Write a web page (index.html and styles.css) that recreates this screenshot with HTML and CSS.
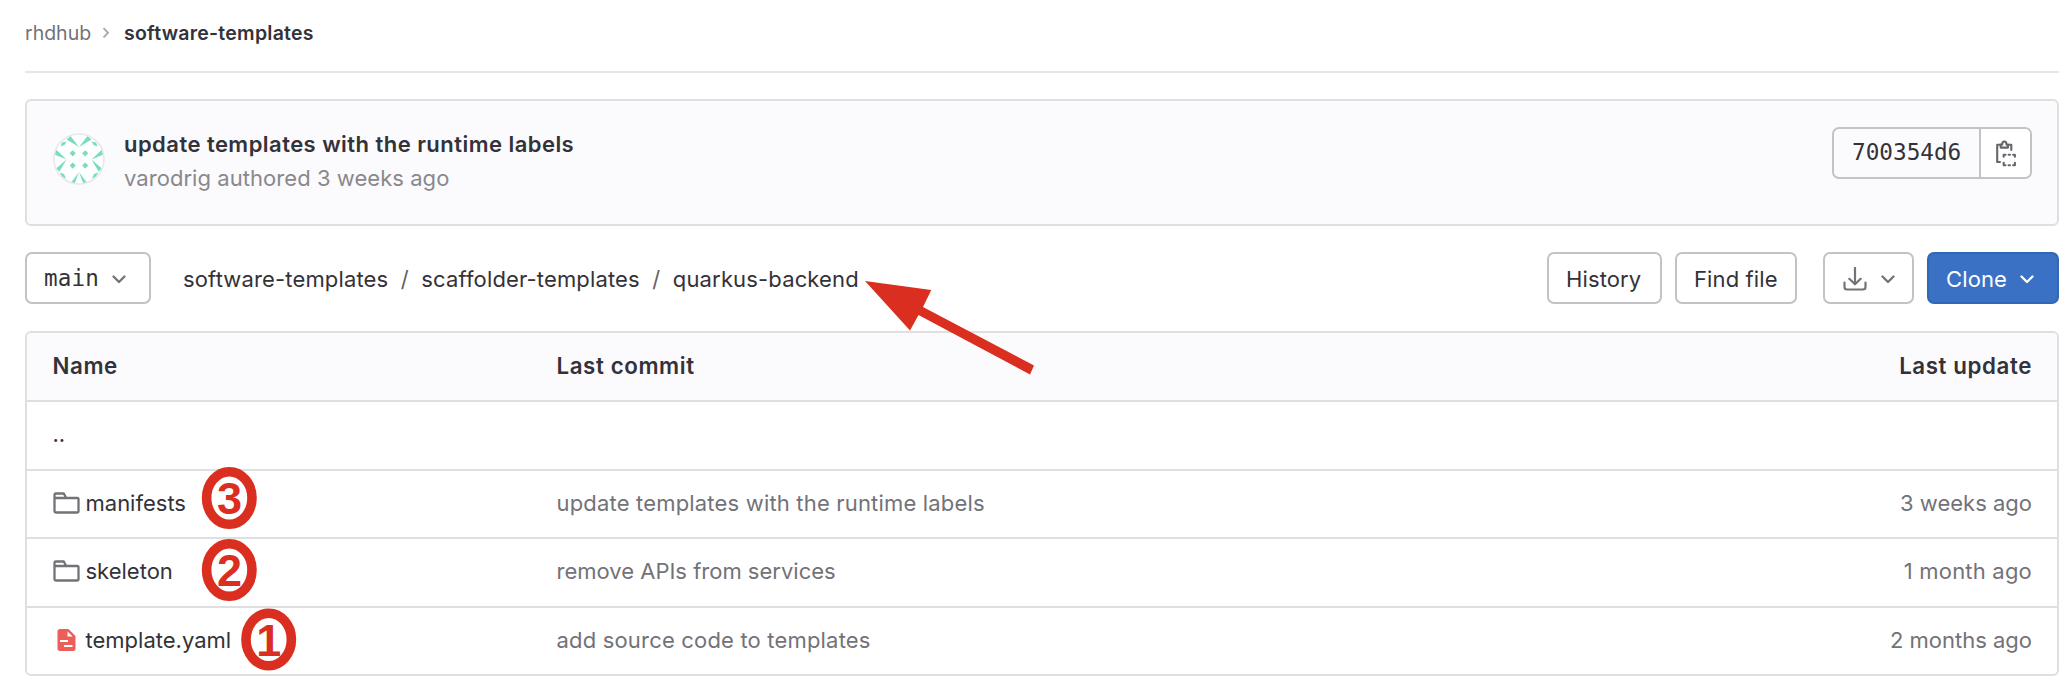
FILE: index.html
```html
<!DOCTYPE html>
<html lang="en">
<head>
<meta charset="utf-8">
<title>software-templates</title>
<link rel="stylesheet" href="styles.css">
</head>
<body>
<svg class="sprite" aria-hidden="true">
  <symbol id="chevron" viewBox="0 0 16 16"><path d="M4 6.200 8 10.200l4-4" fill="none" stroke="currentColor" stroke-width="1.700" stroke-linecap="round" stroke-linejoin="round"/></symbol>
  <symbol id="folder" viewBox="0 0 27 22"><path d="M1.500 19.200V2.800Q1.500 1.500 2.800 1.500H10.800L13.200 6H24Q25.500 6 25.500 7.300V19.200Q25.500 20.500 24 20.500H2.800Q1.500 20.500 1.500 19.200ZM1.500 6H13.200" fill="none" stroke="#737278" stroke-width="2.300" stroke-linejoin="round"/></symbol>
</svg>
<main class="page">
  <nav class="crumbs">
    <a class="crumb-group">rhdhub</a>
    <svg class="crumb-sep" viewBox="0 0 8 12"><path d="m1.500 1.200 4.500 4.600-4.500 4.600" fill="none" stroke="#a4a3a8" stroke-width="1.700"/></svg>
    <a class="crumb-project">software-templates</a>
  </nav>

  <section class="commit">
    <svg class="avatar" viewBox="0 0 52 52">
      <defs><clipPath id="round"><circle cx="26" cy="26" r="25"/></clipPath></defs>
      <circle cx="26" cy="26" r="25" fill="#fff"/>
      <g clip-path="url(#round)" fill="#7adcc2">
        <path d="M26 14 13.500 6.500 17.500 3ZM26 14 38.500 6.500 34.500 3ZM26 39 17 51H21.500ZM26 39 35 51H30.500ZM13.500 26.500 1.500 21.500 2.500 16ZM13.500 26.500 6.500 38.500 3 35.500ZM38.500 26.500 50.500 21.500 49.500 16ZM38.500 26.500 45.500 38.500 49 35.500Z"/>
        <path d="M7.500 13.500 9 9.500 13.500 8.500 11.500 12ZM44.500 13.500 43 9.500 38.500 8.500 40.500 12ZM7 39.500 11 41 13 45.500 9 44ZM45 39.500 41 41 39 45.500 43 44Z"/>
        <path d="m19.700 17.200 3.100 3.100-3.100 3.100-3.100-3.100ZM32.200 17.200l3.100 3.100-3.100 3.100-3.100-3.100ZM19.700 29.500l3.100 3.100-3.100 3.100-3.100-3.100ZM32.200 29.500l3.100 3.100-3.100 3.100-3.100-3.100Z"/>
      </g>
      <circle cx="26" cy="26" r="25" fill="none" stroke="#e8e8ea" stroke-width="1.600"/>
    </svg>
    <div class="commit-text">
      <a class="commit-title">update templates with the runtime labels</a>
      <span class="commit-meta">varodrig authored 3 weeks ago</span>
    </div>
    <div class="sha">
      <span class="sha-value">700354d6</span>
      <button class="sha-copy" aria-label="Copy commit SHA">
        <svg viewBox="0 0 20 27" fill="none" stroke="#67666c" stroke-width="2.100" stroke-linejoin="round" stroke-linecap="round"><path d="M4 4.800H1.200V22H4M12.500 4.800H15.300V10"/><path d="M4.700 7.600V4.600H6.200C6.200.4 10.500.4 10.500 4.600H12V7.600Z"/><path d="M7.700 16.800V14.700H9.500M12.600 14.700H14M17.100 14.700H18.900V16.800M18.900 22.800V25.200H17.100M14 25.200H12.600M9.500 25.200H7.700V22.800"/></svg>
      </button>
    </div>
  </section>

  <div class="toolbar">
    <button class="btn btn-branch">main <svg class="chev"><use href="#chevron"/></svg></button>
    <nav class="path">
      <a class="path-root">software-templates</a><span>/</span><a class="path-mid">scaffolder-templates</a><span>/</span><a class="path-leaf">quarkus-backend</a>
    </nav>
    <button class="btn btn-history">History</button>
    <button class="btn btn-find">Find file</button>
    <button class="btn btn-download" aria-label="Download">
      <svg class="dl" viewBox="0 0 24 24"><path d="M12 1V17M6.300 11.800 12 17.300l5.700-5.500M1.500 15.500V20Q1.500 22.500 4 22.500H20Q22.500 22.500 22.500 20V15.500" fill="none" stroke="currentColor" stroke-width="2.200" stroke-linecap="round" stroke-linejoin="round"/></svg>
      <svg class="chev"><use href="#chevron"/></svg>
    </button>
    <button class="btn btn-clone">Clone <svg class="chev"><use href="#chevron"/></svg></button>
  </div>

  <section class="files">
    <div class="row head"><span>Name</span><span>Last commit</span><span class="when">Last update</span></div>
    <div class="row up"><a>..</a></div>
    <div class="row"><a class="name"><svg class="folder"><use href="#folder"/></svg><span>manifests</span></a><span class="msg wide">update templates with the runtime labels</span><span class="when">3 weeks ago</span></div>
    <div class="row"><a class="name"><svg class="folder"><use href="#folder"/></svg><span>skeleton</span></a><span class="msg">remove APIs from services</span><span class="when month">1 month ago</span></div>
    <div class="row"><a class="name"><svg class="doc" viewBox="0 0 27 24"><path d="M7 1H15.500L22.500 8V20.500Q22.500 23 20 23H7Q4.500 23 4.500 20.500V3.500Q4.500 1 7 1Z" fill="#ec5f59"/><path d="M14.500 3.500V8.500H19.700ZM7 12H15V14H7ZM11 17H19.500V19H11Z" fill="#fff"/></svg><span>template.yaml</span></a><span class="msg wide">add source code to templates</span><span class="when">2 months ago</span></div>
  </section>
</main>

<svg class="annotations" viewBox="0 0 2072 692">
  <path d="M865 281 931.300 290 923 307 1034 365.500 1030 374.500 918.500 315 910 330.500Z"/>
  <g class="rings">
    <ellipse cx="229.300" cy="498" rx="22.700" ry="26.200"/>
    <ellipse cx="229.300" cy="570" rx="22.700" ry="26.200"/>
    <ellipse cx="268.700" cy="639.500" rx="22.700" ry="26.200"/>
  </g>
  <text x="229.500" y="514">3</text>
  <text x="229.500" y="586">2</text>
  <text x="268.700" y="655.500">1</text>
</svg>
</body>
</html>
```
FILE: styles.css
```css
* { box-sizing: border-box; }

body {
  margin: 0;
  background: #fff;
  color: #333238;
  font-family: Inter, "Liberation Sans", sans-serif;
  font-size: 22px;
  line-height: 32px;
}

.sprite { position: absolute; width: 0; height: 0; }

.page { width: 2072px; height: 692px; padding: 0 13px 0 25px; overflow: hidden; }

.crumbs {
  display: flex;
  align-items: center;
  height: 73px;
  padding-bottom: 5px;
  border-bottom: 2px solid #e6e6e8;
  font-size: 19.500px;
}
.crumb-group { width: 66px; color: #737278; }
.crumb-sep { width: 8px; height: 12px; margin: 0 16px 0 11px; }
.crumb-sep + .crumb-project { margin-left: -2px; }
.crumb-project { font-weight: 600; letter-spacing: .25px; }

.commit {
  display: flex;
  height: 127px;
  margin-top: 26px;
  padding: 27px 25px 0 27px;
  border: 2px solid #dfdfe1;
  border-radius: 6px;
  background: #fbfafd;
}
.avatar { width: 52px; height: 52px; margin: 5px 19px 0 -1px; }
.commit-text { display: flex; flex-direction: column; flex: 1; padding-top: 1px; line-height: 34px; }
.commit-title { font-weight: 600; margin-top: -2px; letter-spacing: .46px; }
.commit-meta { color: #89888d; letter-spacing: .05px; }

.sha { display: flex; width: 200px; height: 52px; margin-top: -1px; border: 2px solid #c3c2c7; border-radius: 7px; overflow: hidden; }
.sha-value { flex: 1; padding-left: 18px; font: 22.700px/47px "DejaVu Sans Mono", monospace; }
.sha-copy { display: grid; place-items: center; width: 51px; padding: 0; border: 0; border-left: 2px solid #c3c2c7; background: #fff; }
.sha-copy svg { width: 20px; height: 27px; }

.toolbar { display: flex; align-items: center; height: 52px; margin-top: 26px; }
.btn {
  display: flex;
  align-items: center;
  height: 52px;
  padding: 1px 0 0 17px;
  border: 2px solid #c3c2c7;
  border-radius: 7px;
  background: #fff;
  color: #333238;
  font: 22px/1 Inter, "Liberation Sans", sans-serif;
  letter-spacing: .12px;
  white-space: nowrap;
}
.btn svg { flex: none; }
.chev { width: 22px; height: 22px; color: #737278; }
.btn-branch { width: 126px; font-family: "DejaVu Sans Mono", monospace; font-size: 22.600px; }
.btn-branch .chev { margin-left: 9px; }
.path { display: flex; flex: 1; margin-left: 32px; padding-top: 1px; letter-spacing: .15px; }
.path span { width: 33px; text-align: center; color: #626168; }
.btn-history { width: 115px; }
.btn-find { width: 122px; margin-left: 13px; }
.btn-download { width: 91px; margin-left: 26px; padding-left: 18px; color: #737278; }
.dl { width: 24px; height: 24px; }
.btn-download .chev { margin-left: 10px; }
.btn-clone { width: 132px; margin-left: 13px; border-color: #2f68b4; background: #3a71c4; color: #fff; }
.btn-clone .chev { margin-left: 9px; color: #fff; }

.files { margin-top: 27px; border: 2px solid #dfdfe1; border-radius: 6px; overflow: hidden; }
.row {
  display: grid;
  grid-template-columns: 504px 1fr 300px;
  align-items: center;
  height: 68.500px;
  padding: 0 25px 2px 25.500px;
  border-top: 2px solid #dfdfe1;
}
.row.head { height: 67px; border-top: 0; background: #fbfafd; font-weight: 600; font-size: 22.300px; letter-spacing: .6px; }
.name { display: flex; align-items: center; gap: 6px; }
.folder { width: 27px; height: 22px; }
.doc { width: 27px; height: 24px; }
.msg { color: #737278; }
.msg.wide { letter-spacing: .18px; }
.when { text-align: right; }
.row:not(.head) .when { color: #737278; }
.row .when.month { letter-spacing: .2px; }

.annotations { position: absolute; inset: 0; width: 2072px; height: 692px; fill: #da2f20; pointer-events: none; }
.rings { fill: #fff; stroke: #da2f20; stroke-width: 9.600px; }
.annotations text { font: bold 45px "Liberation Sans", sans-serif; text-anchor: middle; }
```
